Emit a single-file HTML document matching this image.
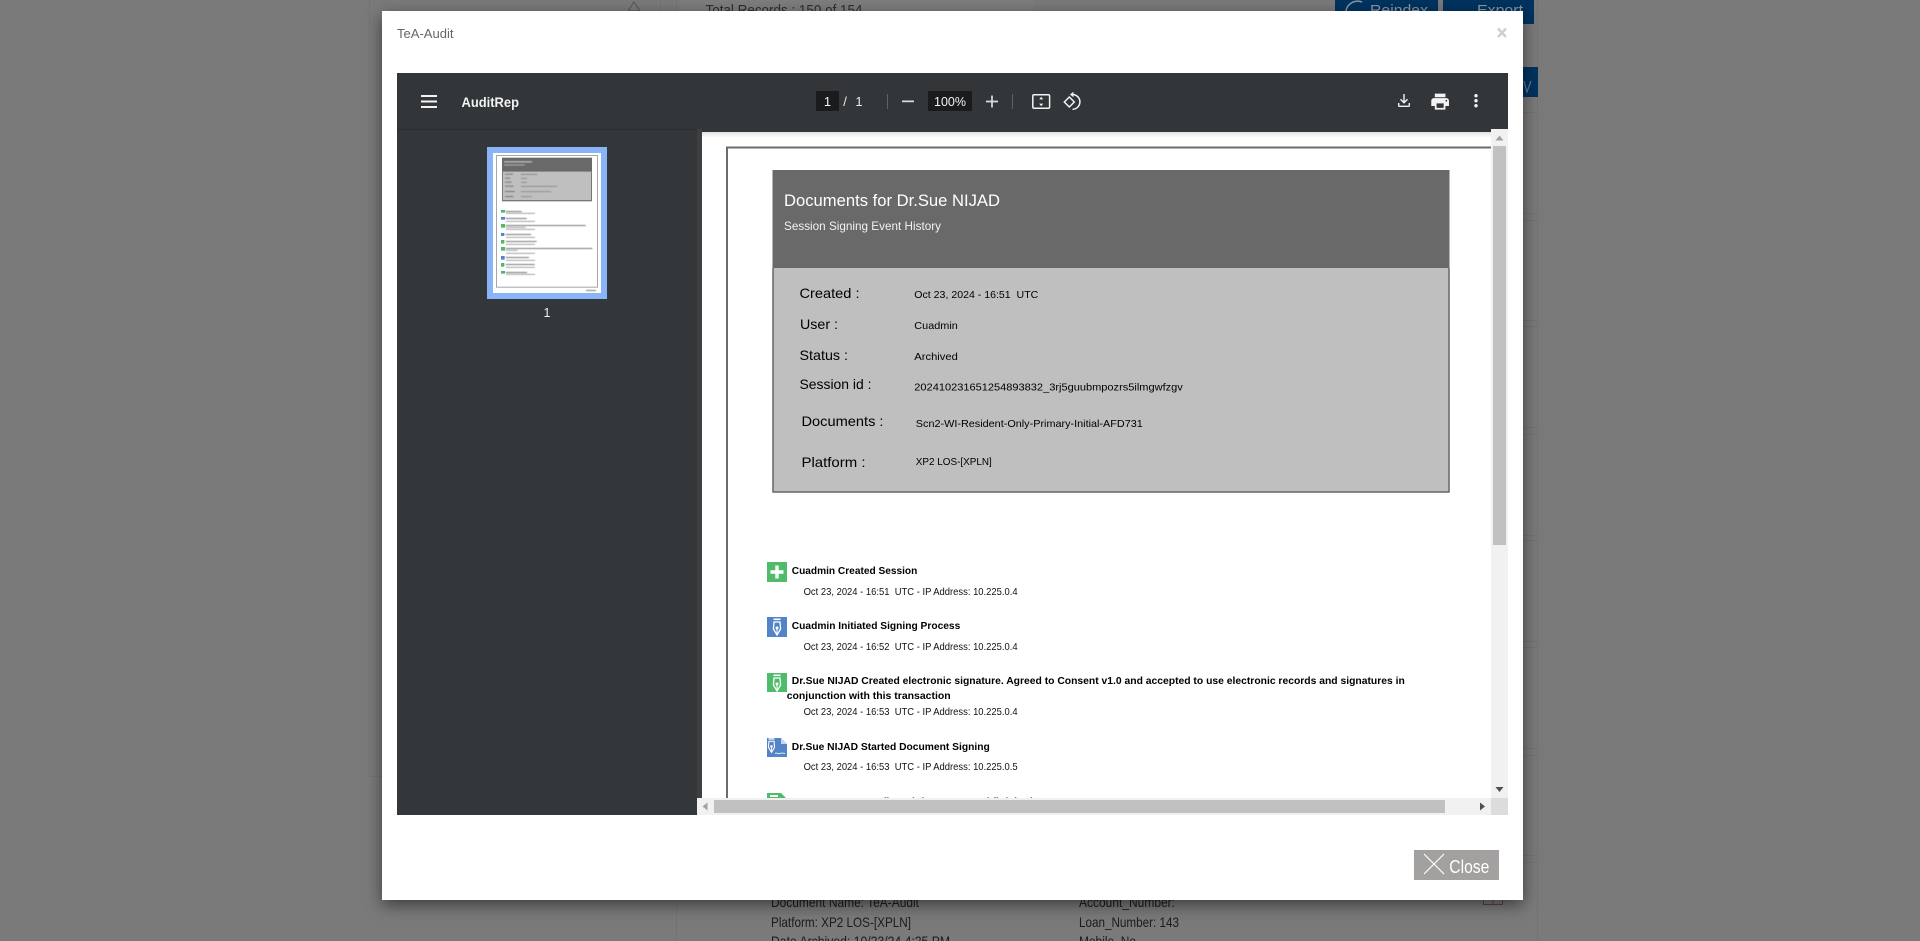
<!DOCTYPE html>
<html lang="en"><head><meta charset="utf-8"><title>TeA-Audit</title>
<style>
html,body{margin:0;padding:0;width:1920px;height:941px;overflow:hidden;background:#7a7a7a}
svg{position:absolute;left:0;top:0;display:block}
#modal{position:absolute;left:382px;top:11px;width:1141px;height:889px;background:#fff;box-shadow:0 5px 15px rgba(0,0,0,.5)}
text{font-family:"Liberation Sans",sans-serif;white-space:pre}
</style></head><body>
<svg width="1920" height="941" viewBox="0 0 1920 941">
  <g fill="none" stroke="#737373">
    <path d="M369.500 0V776.500H660.500V0"/>
    <path d="M676.500 0V941M1537.500 0V941"/>
    <rect x="676.500" y="112.500" width="861" height="101"/>
    <rect x="676.500" y="220.500" width="861" height="100"/>
    <rect x="676.500" y="326.500" width="861" height="101"/>
    <rect x="676.500" y="434.500" width="861" height="101"/>
    <rect x="676.500" y="540.500" width="861" height="101"/>
    <rect x="676.500" y="647.500" width="861" height="101"/>
    <rect x="676.500" y="755.500" width="861" height="100"/>
    <rect x="676.500" y="862.500" width="861" height="100"/>
  </g>
  <rect x="680" y="0" width="354" height="40" fill="#7d7d7d"/>
  <path d="M634 2l6 9h-12z" fill="none" stroke="#555"/>
  <text x="705.500" y="15" font-size="15" fill="#2e2e2e" textLength="157" lengthAdjust="spacingAndGlyphs">Total Records : 150 of 154</text>
  <rect x="1335" y="0" width="103" height="24" fill="#00335f"/>
  <rect x="1443" y="0" width="91" height="24" fill="#00335f"/>
  <rect x="1500" y="67" width="38" height="30" fill="#00335f"/>
  <path d="M1346 16a12 12 0 0 1 16-14" fill="none" stroke="#8a97a3" stroke-width="1.500"/>
  <text x="1370" y="15" font-size="15" fill="#8a97a3" textLength="58" lengthAdjust="spacingAndGlyphs">Reindex</text>
  <text x="1477" y="15" font-size="15" fill="#8a97a3" textLength="46" lengthAdjust="spacingAndGlyphs">Export</text>
  <path d="M1524 81l3 11 4-11" fill="none" stroke="#5f7890" stroke-width="1.200"/>
  <g font-size="14" fill="#1c1c1c">
    <text x="771" y="907" textLength="148" lengthAdjust="spacingAndGlyphs">Document Name: TeA-Audit</text>
    <text x="771" y="927" textLength="140" lengthAdjust="spacingAndGlyphs">Platform: XP2 LOS-[XPLN]</text>
    <text x="771" y="946" textLength="179" lengthAdjust="spacingAndGlyphs">Date Archived: 10/23/24 4:25 PM</text>
    <text x="1079" y="907" textLength="96" lengthAdjust="spacingAndGlyphs">Account_Number:</text>
    <text x="1079" y="927" textLength="100" lengthAdjust="spacingAndGlyphs">Loan_Number: 143</text>
    <text x="1079" y="946" textLength="57" lengthAdjust="spacingAndGlyphs">Mobile_No</text>
  </g>
  <path d="M1483.500 895v9.500h19v-9.500M1493 895v9" fill="none" stroke="#6b4044"/>
</svg>
<div id="modal"></div>
<svg width="1920" height="941" viewBox="0 0 1920 941">
  <defs>
    <clipPath id="pg"><rect x="702" y="132" width="789" height="666"/></clipPath>
    <g id="nib">
      <rect x="6.500" y="1.500" width="7" height="1.600" fill="#fff"/>
      <path d="M7 5h6l.6 7L10 18 6.400 12z" fill="none" stroke="#fff" stroke-width="1.300"/>
      <circle cx="10" cy="11" r="1.500" fill="#fff"/>
      <path d="M10 12v6" stroke="#fff"/>
    </g>
    <filter id="bl"><feGaussianBlur stdDeviation="1.600"/></filter>
  </defs>

  <text x="397" y="38" font-size="13" fill="#666" textLength="56.500" lengthAdjust="spacingAndGlyphs">TeA-Audit</text>
  <path d="M1498 28.500l8 8.500M1506 28.500l-8 8.500" stroke="#cfcfcf" stroke-width="2.400"/>

  <!-- viewer -->
  <rect x="397" y="73" width="1111" height="725" fill="#323639"/>
  <rect x="397" y="129" width="300" height="1" fill="#2a2d30"/>
  <rect x="397" y="130" width="300" height="685" fill="#33373a"/>
  <rect x="697" y="129" width="5" height="669" fill="#3d4043"/>
  <rect x="702" y="132" width="789" height="666" fill="#fff"/>
  <linearGradient id="sh" x1="0" y1="0" x2="0" y2="1"><stop offset="0" stop-color="#e2e2e2"/><stop offset="1" stop-color="#fff"/></linearGradient>
  <rect x="702" y="132" width="789" height="6" fill="url(#sh)"/>

  <!-- toolbar -->
  <g fill="#f1f3f4">
    <rect x="421" y="95" width="16" height="2"/><rect x="421" y="100.500" width="16" height="2"/><rect x="421" y="106" width="16" height="2"/>
  </g>
  <text x="461.500" y="107" font-size="14" font-weight="bold" fill="#f1f3f4" textLength="57.500" lengthAdjust="spacingAndGlyphs">AuditRep</text>
  <rect x="816" y="91" width="23" height="20" fill="#191b1c"/>
  <text x="827.500" y="106" font-size="13" fill="#f1f3f4" text-anchor="middle">1</text>
  <text x="845" y="106" font-size="13" fill="#e8eaed" text-anchor="middle">/</text>
  <text x="859" y="106" font-size="13" fill="#e8eaed" text-anchor="middle">1</text>
  <rect x="887" y="94" width="1" height="15" fill="#5f6265"/>
  <rect x="902" y="100.500" width="12" height="1.700" fill="#dadce0"/>
  <rect x="928" y="91" width="44" height="20" fill="#191b1c"/>
  <text x="950" y="106" font-size="13" fill="#f1f3f4" text-anchor="middle" textLength="32" lengthAdjust="spacingAndGlyphs">100%</text>
  <path d="M986 101.500h12M992 95.500v12" stroke="#dadce0" stroke-width="1.700" fill="none"/>
  <rect x="1012" y="94" width="1" height="15" fill="#5f6265"/>
  <rect x="1032.800" y="94.800" width="16.800" height="13.400" rx="1.200" fill="none" stroke="#f1f3f4" stroke-width="1.500"/>
  <path d="M1041.200 96.800l2 2.600h-4zM1041.200 106.200l2-2.600h-4z" fill="#f1f3f4"/>
  <path d="M1069.300 97l5 5-5 5-5-5z" fill="none" stroke="#f1f3f4" stroke-width="1.500"/>
  <path d="M1072.500 94.500A7.400 7.400 0 1 1 1072.500 109.300" fill="none" stroke="#f1f3f4" stroke-width="1.500"/>
  <path d="M1073.500 91.800v5.400l-3.600-2.700z" fill="#f1f3f4"/>
  <path d="M1404 94v8.500M1400.500 99.300l3.500 3.500 3.500-3.500M1398.700 103v2.500a.8.8 0 0 0 .8.8h9a.8.8 0 0 0 .8-.8V103" fill="none" stroke="#f1f3f4" stroke-width="1.400"/>
  <path transform="translate(1429.500 91) scale(.885)" fill="#f1f3f4" d="M19 8H5c-1.660 0-3 1.340-3 3v6h4v4h12v-4h4v-6c0-1.660-1.340-3-3-3zm-3 11H8v-5h8v5zm3-7c-.550 0-1-.450-1-1s.450-1 1-1 1 .450 1 1-.450 1-1 1zm-1-9H6v4h12V3z"/>
  <circle cx="1476" cy="95.700" r="1.700" fill="#f1f3f4"/><circle cx="1476" cy="100.700" r="1.700" fill="#f1f3f4"/><circle cx="1476" cy="105.700" r="1.700" fill="#f1f3f4"/>

  <!-- thumbnail -->
  <rect x="487" y="147" width="120" height="152" fill="#8ab4f8"/>
  <rect x="493" y="153" width="108" height="140" fill="#fff"/>
  <g transform="translate(480 140) scale(.33333)">
    <rect x="49.500" y="46.500" width="303" height="395" fill="none" stroke="#9a9a9a" stroke-width="2.600"/>
    <rect x="66" y="53" width="270" height="42" fill="#696969"/>
    <rect x="66" y="95" width="270" height="89" fill="#777"/>
    <rect x="69" y="95" width="264" height="85" fill="#bfbfbf"/>
    <g filter="url(#bl)">
      <g fill="#d8d8d8"><rect x="72" y="64" width="84" height="3"/><rect x="72" y="74" width="62" height="2"/></g>
      <g fill="#777">
        <rect x="75" y="101" width="24" height="3"/><rect x="123" y="102" width="50" height="2"/>
        <rect x="75" y="113" width="16" height="3"/><rect x="123" y="114" width="18" height="2"/>
        <rect x="75" y="125" width="20" height="3"/><rect x="123" y="126" width="18" height="2"/>
        <rect x="75" y="137" width="26" height="3"/><rect x="123" y="138" width="108" height="2"/>
        <rect x="75" y="153" width="30" height="3"/><rect x="123" y="154" width="90" height="2"/>
        <rect x="75" y="168" width="26" height="3"/><rect x="123" y="169" width="32" height="2"/>
        <rect x="77" y="213" width="48" height="3"/><rect x="78" y="219" width="87" height="2"/>
        <rect x="77" y="234" width="63" height="3"/><rect x="78" y="243" width="87" height="2"/>
        <rect x="77" y="255" width="240" height="3"/><rect x="77" y="261" width="60" height="2"/><rect x="78" y="267" width="87" height="2"/>
        <rect x="77" y="282" width="76" height="3"/><rect x="78" y="291" width="87" height="2"/>
        <rect x="77" y="303" width="93" height="3"/><rect x="78" y="312" width="87" height="2"/>
        <rect x="77" y="324" width="260" height="3"/><rect x="77" y="330" width="36" height="2"/><rect x="78" y="339" width="87" height="2"/>
        <rect x="77" y="351" width="70" height="3"/><rect x="78" y="360" width="87" height="2"/>
        <rect x="77" y="372" width="87" height="3"/><rect x="78" y="381" width="87" height="2"/>
        <rect x="77" y="396" width="64" height="3"/><rect x="78" y="402" width="87" height="2"/>
        <rect x="318" y="450" width="30" height="3"/>
      </g>
    </g>
    <g fill="#4fb96a">
      <rect x="63" y="210" width="12" height="8"/><rect x="63" y="252" width="12" height="11"/><rect x="63" y="300" width="10" height="11"/><rect x="63" y="321" width="12" height="11"/><rect x="63" y="369" width="10" height="11"/><rect x="63" y="393" width="12" height="8"/>
    </g>
    <g fill="#5384c7">
      <rect x="63" y="231" width="12" height="8"/><rect x="63" y="279" width="10" height="9"/><rect x="63" y="348" width="11" height="11"/>
    </g>
  </g>
  <text x="547" y="317" font-size="12.500" fill="#f1f3f4" text-anchor="middle">1</text>

  <!-- pdf page -->
  <g clip-path="url(#pg)">
    <path d="M727 798V147.500H1491" fill="none" stroke="#6c6c6c" stroke-width="2"/>
    <rect x="772.500" y="170" width="677" height="98" fill="#696969"/>
    <rect x="773" y="268" width="676" height="224" fill="#bfbfbf"/>
    <path d="M773 268V492H1449V268" fill="none" stroke="#666" stroke-width="1.500"/>
    <text x="784" y="206" font-size="16.500" fill="#fff" textLength="216" lengthAdjust="spacingAndGlyphs">Documents for Dr.Sue NIJAD</text>
    <text x="784" y="230" font-size="12" fill="#f2f2f2" textLength="157" lengthAdjust="spacingAndGlyphs">Session Signing Event History</text>
    <g font-size="14" fill="#000">
      <text x="799.500" y="298" textLength="60" lengthAdjust="spacingAndGlyphs">Created :</text>
      <text x="800" y="329" textLength="38" lengthAdjust="spacingAndGlyphs">User :</text>
      <text x="799.500" y="360" textLength="48.500" lengthAdjust="spacingAndGlyphs">Status :</text>
      <text x="799.500" y="389" textLength="72" lengthAdjust="spacingAndGlyphs">Session id :</text>
      <text x="801.500" y="426" textLength="82" lengthAdjust="spacingAndGlyphs">Documents :</text>
      <text x="801.500" y="467" textLength="64" lengthAdjust="spacingAndGlyphs">Platform :</text>
    </g>
    <g font-size="10.500" fill="#000">
      <text x="914.300" y="298" textLength="124" lengthAdjust="spacingAndGlyphs">Oct 23, 2024 - 16:51  UTC</text>
      <text x="914.300" y="329" textLength="43.500" lengthAdjust="spacingAndGlyphs">Cuadmin</text>
      <text x="914.300" y="360" textLength="43.500" lengthAdjust="spacingAndGlyphs">Archived</text>
      <text x="914.300" y="390.500" textLength="268.500" lengthAdjust="spacingAndGlyphs">202410231651254893832_3rj5guubmpozrs5ilmgwfzgv</text>
      <text x="915.800" y="427" textLength="227" lengthAdjust="spacingAndGlyphs">Scn2-WI-Resident-Only-Primary-Initial-AFD731</text>
      <text x="915.800" y="465" textLength="76" lengthAdjust="spacingAndGlyphs">XP2 LOS-[XPLN]</text>
    </g>

    <!-- icons -->
    <rect x="767" y="562" width="20" height="20" fill="#4ebc68"/>
    <path d="M777 565.500v13M770.500 572h13" stroke="#fff" stroke-width="3.400"/>
    <rect x="767" y="617" width="20" height="20" fill="#5384c7"/>
    <use href="#nib" x="767" y="617"/>
    <rect x="767" y="673" width="20" height="19" fill="#4ebc68"/>
    <use href="#nib" x="767" y="673"/>
    <path d="M767 738h14l6 6v13h-20z" fill="#5384c7"/>
    <path d="M781 738l6 6h-6z" fill="#c9d8ee"/>
    <g transform="translate(763 737) scale(.85)"><use href="#nib" x="0" y="0"/></g>
    <path d="M775 753.500c2-1.500 3 1 5 0s3-.5 5 0" fill="none" stroke="#fff" stroke-width=".8"/>
    <path d="M767 793h14l6 6v13h-20z" fill="#4ebc68"/>
    <rect x="770" y="795" width="8" height="2" fill="#fff"/>

    <g font-size="10.500" font-weight="bold" fill="#000">
      <text x="791.800" y="574" textLength="125.500" lengthAdjust="spacingAndGlyphs">Cuadmin Created Session</text>
      <text x="791.800" y="629" textLength="168.500" lengthAdjust="spacingAndGlyphs">Cuadmin Initiated Signing Process</text>
      <text x="791.800" y="684" textLength="613" lengthAdjust="spacingAndGlyphs">Dr.Sue NIJAD Created electronic signature. Agreed to Consent v1.0 and accepted to use electronic records and signatures in</text>
      <text x="786.700" y="699" textLength="164" lengthAdjust="spacingAndGlyphs">conjunction with this transaction</text>
      <text x="791.800" y="750" textLength="198" lengthAdjust="spacingAndGlyphs">Dr.Sue NIJAD Started Document Signing</text>
      <text x="791.800" y="805" textLength="241" lengthAdjust="spacingAndGlyphs">Dr.Sue NIJAD Confirmed document and finished</text>
    </g>
    <g font-size="10.500" fill="#111">
      <text x="803.600" y="595" textLength="214" lengthAdjust="spacingAndGlyphs">Oct 23, 2024 - 16:51  UTC - IP Address: 10.225.0.4</text>
      <text x="803.600" y="650" textLength="214" lengthAdjust="spacingAndGlyphs">Oct 23, 2024 - 16:52  UTC - IP Address: 10.225.0.4</text>
      <text x="803.600" y="715" textLength="214" lengthAdjust="spacingAndGlyphs">Oct 23, 2024 - 16:53  UTC - IP Address: 10.225.0.4</text>
      <text x="803.600" y="770" textLength="214" lengthAdjust="spacingAndGlyphs">Oct 23, 2024 - 16:53  UTC - IP Address: 10.225.0.5</text>
    </g>
  </g>

  <!-- scrollbars -->
  <rect x="1491" y="129" width="17" height="669" fill="#f1f1f1"/>
  <rect x="1493" y="146" width="13" height="399" fill="#c1c1c1"/>
  <path d="M1499.500 135.500l4 5h-8z" fill="#a3a3a3"/>
  <path d="M1495.500 787h8l-4 5z" fill="#505050"/>
  <rect x="697" y="798" width="794" height="17" fill="#f1f1f1"/>
  <rect x="714" y="800" width="731" height="13" fill="#c1c1c1"/>
  <path d="M707.500 802.500v8l-5-4z" fill="#a3a3a3"/>
  <path d="M1480 802.500v8l5-4z" fill="#505050"/>
  <rect x="1491" y="798" width="17" height="17" fill="#dcdcdc"/>

  <!-- close -->
  <rect x="1414" y="850" width="85" height="30" fill="#a3a1a0"/>
  <path d="M1424 854l20 20M1444 854l-20 20" stroke="#fff" stroke-width="1.200"/>
  <text x="1449.300" y="873" font-size="18" fill="#fff" textLength="40" lengthAdjust="spacingAndGlyphs">Close</text>
</svg>
</body></html>
